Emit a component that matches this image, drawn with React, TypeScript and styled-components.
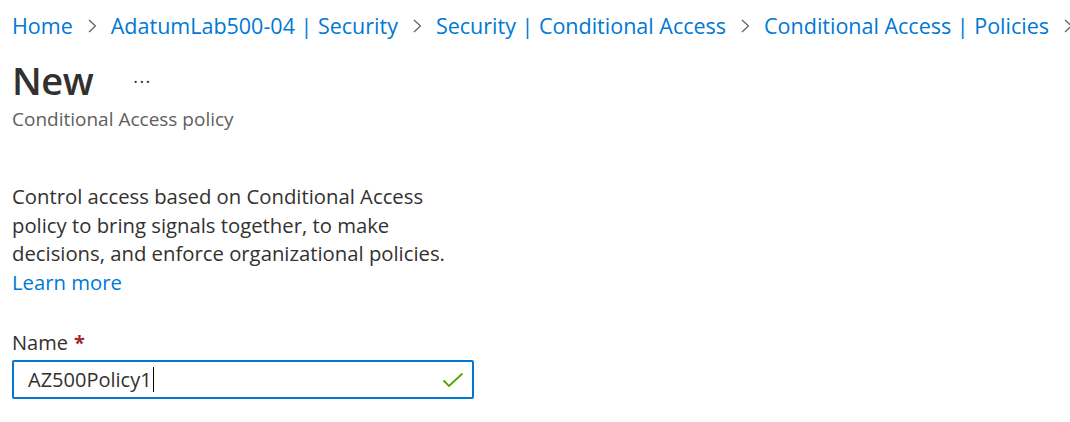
import React from "react";
import styled, { createGlobalStyle } from "styled-components";

const Global = createGlobalStyle`
  html, body { margin: 0; padding: 0; background: #fff; }
  body { font-family: "Open Sans", "Noto Sans", sans-serif; color: #323130; }
`;

const Page = styled.div`
  padding: 8px 12px 0 12px;
  display: flex;
  flex-direction: column;
`;

const Breadcrumb = styled.nav`
  display: flex;
  align-items: center;
  gap: 13px;
  font-size: 21.5px;
  line-height: 36px;
  white-space: nowrap;
`;

const Crumb = styled.a`
  color: #0078d4;
  text-decoration: none;
`;

const Chevron = styled.svg`
  width: 12px;
  height: 18px;
  flex: none;
`;

const TitleRow = styled.div`
  display: flex;
  align-items: center;
  gap: 40px;
  margin-top: 14px;
`;

const Title = styled.h1`
  margin: 0;
  font-size: 38px;
  font-weight: 600;
  line-height: 44px;
  letter-spacing: -0.5px;
  color: #323130;
`;

const More = styled.span`
  font-size: 18px;
  color: #323130;
  letter-spacing: 1.5px;
  margin-top: 2px;
`;

const Subtitle = styled.div`
  font-size: 19px;
  line-height: 26px;
  color: #605e5c;
  margin-top: 4px;
`;

const Description = styled.p`
  margin: 50px 0 0 0;
  width: 450px;
  font-size: 20.3px;
  line-height: 28.5px;
  color: #323130;
`;

const Link = styled.a`
  color: #0078d4;
  text-decoration: none;
  display: block;
`;

const Field = styled.div`
  display: flex;
  flex-direction: column;
  margin-top: 34px;
  gap: 4px;
`;

const Label = styled.label`
  font-size: 20px;
  line-height: 26px;
  color: #323130;
`;

const Required = styled.span`
  color: #a4262c;
  margin-left: 6px;
  font-weight: 700;
`;

const InputBox = styled.div`
  box-sizing: border-box;
  height: 39px;
  width: 462px;
  border: 2px solid #0078d4;
  border-radius: 2px;
  display: flex;
  align-items: center;
  padding: 0 8px 0 14px;
`;

const Value = styled.span`
  font-size: 20px;
  color: #323130;
  flex: 1;
  display: flex;
  align-items: center;
`;

const Caret = styled.span`
  display: inline-block;
  width: 1px;
  height: 25px;
  background: #000;
  margin-left: 1px;
`;

const Check = styled.svg`
  width: 22px;
  height: 16px;
  flex: none;
`;

const ChevronIcon = () => (
  <Chevron viewBox="0 0 12 18">
    <path d="M3 3 L9.5 9 L3 15" fill="none" stroke="#605e5c" strokeWidth="1.2" />
  </Chevron>
);

export default function App() {
  const crumbs = [
    "Home",
    "AdatumLab500-04 | Security",
    "Security | Conditional Access",
    "Conditional Access | Policies",
  ];
  return (
    <>
      <Global />
      <Page>
        <Breadcrumb>
          {crumbs.map((c) => (
            <React.Fragment key={c}>
              <Crumb href="#">{c}</Crumb>
              <ChevronIcon />
            </React.Fragment>
          ))}
        </Breadcrumb>
        <TitleRow>
          <Title>New</Title>
          <More>···</More>
        </TitleRow>
        <Subtitle>Conditional Access policy</Subtitle>
        <Description>
          Control access based on Conditional Access policy to bring signals together, to make
          decisions, and enforce organizational policies.
          <Link href="#">Learn more</Link>
        </Description>
        <Field>
          <Label>
            Name<Required>*</Required>
          </Label>
          <InputBox>
            <Value>
              AZ500Policy1
              <Caret />
            </Value>
            <Check viewBox="0 0 22 16">
              <path d="M1.5 8.5 L7 14 L20.5 1.5" fill="none" stroke="#57a300" strokeWidth="1.8" />
            </Check>
          </InputBox>
        </Field>
      </Page>
    </>
  );
}
